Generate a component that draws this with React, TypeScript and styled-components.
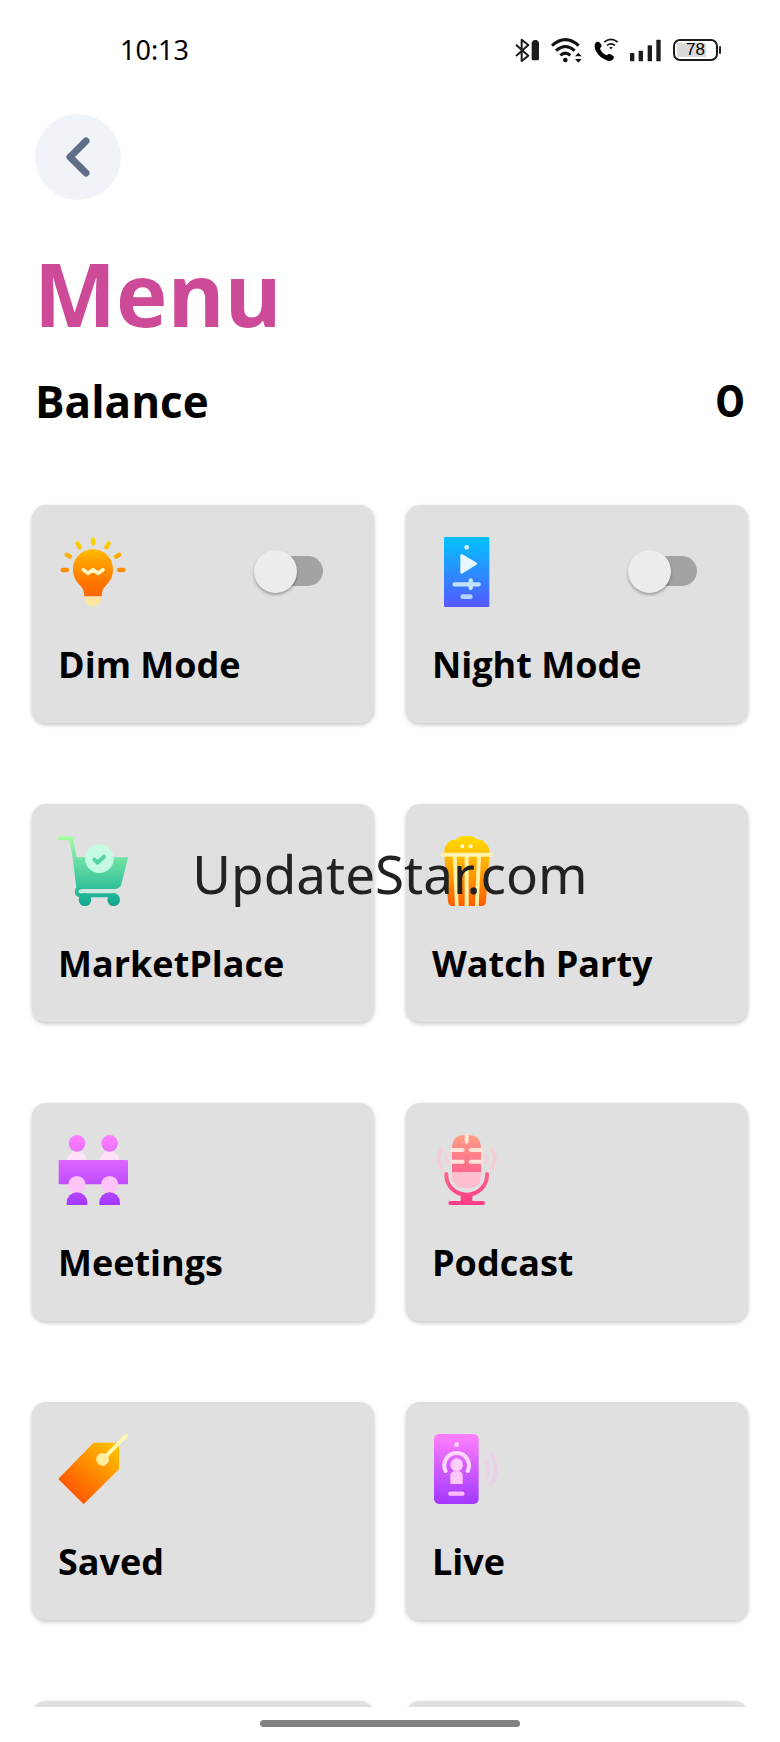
import React, { useState } from "react";
import styled, { createGlobalStyle } from "styled-components";

const GlobalStyle = createGlobalStyle`
  *, *::before, *::after { box-sizing: border-box; }
  body { margin: 0; background: #fff; }
`;

const Screen = styled.div`
  position: relative;
  display: flex;
  flex-direction: column;
  height: 100vh;
  overflow: hidden;
  background: #fff;
  color: #000;
  font-family: "Open Sans", "Noto Sans", sans-serif;
`;

const StatusBar = styled.header`
  display: flex;
  flex: none;
  align-items: center;
  justify-content: space-between;
  height: 100px;
  padding: 0 59px 0 120px;
`;

const Clock = styled.time`
  font: 400 27px/36px "Noto Sans", sans-serif;
`;

const StatusIcons = styled.div`
  display: flex;
  align-items: center;
  gap: 12px;
`;

const Battery = styled.div`
  display: flex;
  align-items: center;
  gap: 1px;

  &::after {
    content: "";
    width: 2px;
    height: 8px;
    border-radius: 1px;
    background: #222;
  }
`;

const BatteryShell = styled.span`
  display: grid;
  place-items: center;
  width: 45px;
  height: 22px;
  border: 2px solid #1c1c1c;
  border-radius: 7px;
  background: linear-gradient(#dadada, #dadada) 2px 2px / 29px 14px no-repeat;
  font: 400 17px/18px "Liberation Sans", sans-serif;
`;

const Content = styled.main`
  flex: 1;
  min-height: 0;
  overflow: hidden;
  padding: 14px 32px 0;
`;

const BackButton = styled.button`
  display: grid;
  place-items: center;
  width: 86px;
  height: 86px;
  margin-left: 3px;
  padding: 0;
  border: 0;
  border-radius: 50%;
  background: #f0f3f8;
  cursor: pointer;
`;

const Title = styled.h1`
  margin: 43px 0 28px;
  padding: 0 2px;
  color: #cd4a99;
  font-size: 87px;
  font-weight: 700;
  line-height: 100px;
`;

const Balance = styled.section`
  display: flex;
  align-items: center;
  justify-content: space-between;
  margin-bottom: 74px;
  padding: 0 3px;
  font-size: 44px;
  font-weight: 700;
  line-height: 60px;
`;

const Amount = styled.span`
  font-family: "Inter", sans-serif;
`;

const CardGrid = styled.div`
  display: grid;
  grid-template-columns: 1fr 1fr;
  gap: 81px 32px;
`;

const Card = styled.div`
  display: flex;
  flex-direction: column;
  gap: 34px;
  height: 218px;
  padding: 32px 26px;
  border: 0;
  border-radius: 14px;
  background: #e0e0e0;
  box-shadow: 0 2px 4px rgba(0, 0, 0, 0.22);
  color: inherit;
  font: inherit;
  text-align: left;
  cursor: pointer;
`;

const CardTop = styled.span`
  display: flex;
  align-items: center;
  justify-content: space-between;
  width: 100%;
  height: 70px;
`;

const CardLabel = styled.span`
  font-size: 36px;
  font-weight: 700;
  line-height: 48px;
  white-space: nowrap;
`;

const Switch = styled.input`
  position: relative;
  appearance: none;
  width: 66px;
  height: 30px;
  margin: 0 25px 2px 0;
  border-radius: 15px;
  background: #a3a3a3;
  cursor: pointer;

  &::before {
    content: "";
    position: absolute;
    top: -6px;
    left: -3px;
    width: 43px;
    height: 43px;
    border-radius: 50%;
    background: #ececec;
    box-shadow: 0 2px 3px rgba(0, 0, 0, 0.3);
  }

  &:checked {
    background: #e3a3c8;
  }

  &:checked::before {
    left: 26px;
    background: #cd4a99;
  }
`;

const Watermark = styled.div`
  position: absolute;
  inset: 0;
  display: grid;
  place-items: center;
  padding-top: 6px;
  color: #222;
  font: 400 53px/72px "Noto Sans", sans-serif;
  pointer-events: none;
`;

const NavBar = styled.footer`
  display: flex;
  flex: none;
  justify-content: center;
  height: 35px;
  padding-top: 13px;
`;

const NavHandle = styled.span`
  width: calc(100% / 3);
  height: 7px;
  border-radius: 4px;
  background: #808080;
`;

const IconSvg = styled.svg`
  display: block;
  flex: none;
  width: 70px;
  height: 70px;
  overflow: visible;
`;

type GradientProps = { id: string; stops: string[]; diagonal?: boolean };

function Gradient({ id, stops, diagonal }: GradientProps) {
  const line = diagonal
    ? { x1: 190, y1: 30, x2: 50, y2: 180 }
    : { x1: 0, y1: 0, x2: 0, y2: 210 };
  return (
    <defs>
      <linearGradient id={id} gradientUnits="userSpaceOnUse" {...line}>
        {stops.map((color, i) => (
          <stop key={color} offset={i / (stops.length - 1)} stopColor={color} />
        ))}
      </linearGradient>
    </defs>
  );
}

function BulbIcon() {
  return (
    <IconSvg viewBox="0 0 210 210" fill="none" aria-hidden="true">
      <Gradient id="bulb" stops={["#ffdf00", "#ffa000", "#ff7400", "#ff5c00"]} />
      <path
        d="M105 8V19M58 19L65 31M152 19L145 31M26 53L36 59M184 53L174 59M14 99H27M183 99H196"
        stroke="url(#bulb)" strokeWidth="13" strokeLinecap="round"
      />
      <path
        d="M105 37C71 37 45 64 45 98C45 120 56 134 66 145C75 155 79 164 79 178H131C131 164 135 155 144 145C154 134 165 120 165 98C165 64 139 37 105 37Z"
        fill="url(#bulb)"
      />
      <path d="M80 179H130C131 196 121 207 105 207S79 196 80 179Z" fill="#ffe6a0" />
      <path d="M76 98L90 109L105 98L120 109L135 98" stroke="#fff7c4" strokeWidth="11" strokeLinecap="round" strokeLinejoin="round" />
    </IconSvg>
  );
}

function PlayerIcon() {
  return (
    <IconSvg viewBox="0 0 210 210" fill="none" aria-hidden="true">
      <Gradient id="player" stops={["#00c3ff", "#5558ff"]} />
      <rect x="36" width="136" height="210" rx="4" fill="url(#player)" />
      <circle cx="104" cy="31" r="7" fill="#d4f5ff" />
      <path d="M89 55V106L131 80Z" fill="#e8f7ff" stroke="#e8f7ff" strokeWidth="8" strokeLinejoin="round" />
      <path d="M68 142H140M116 130V153" stroke="#c2e2ff" strokeWidth="13" strokeLinecap="round" />
      <path d="M92 179H115" stroke="#b4d6ff" strokeWidth="14" strokeLinecap="round" />
    </IconSvg>
  );
}

function CartIcon() {
  return (
    <IconSvg viewBox="0 0 210 210" fill="none" aria-hidden="true">
      <Gradient id="cart" stops={["#a8ff9e", "#6fe0a4", "#3cc79c", "#0ea58f"]} />
      <path d="M6 7H39L51 68" stroke="url(#cart)" strokeWidth="12" strokeLinecap="round" strokeLinejoin="round" />
      <path d="M44 64H210L190 145Q186 158 172 159H66Q55 159 54 148Z" fill="url(#cart)" />
      <path d="M66 155C53 155 53 178 66 178H170" stroke="url(#cart)" strokeWidth="12" strokeLinecap="round" />
      <path d="M66 166H176" stroke="#c8ece0" strokeWidth="9" strokeLinecap="round" />
      <circle cx="81" cy="191" r="19" fill="url(#cart)" />
      <circle cx="167" cy="191" r="19" fill="url(#cart)" />
      <circle cx="124" cy="68" r="43" fill="#c4fbe2" />
      <path d="M109 71L118 80L138 62" stroke="#58d3a4" strokeWidth="12" strokeLinecap="round" strokeLinejoin="round" />
    </IconSvg>
  );
}

function PopcornIcon() {
  return (
    <IconSvg viewBox="0 0 210 210" fill="none" aria-hidden="true">
      <Gradient id="popcorn" stops={["#ffdc00", "#ffb400", "#ff8c00", "#ff5c00"]} />
      <path
        d="M37 52C36 36 42 23 52 17C58 11 65 11 72 11C80 0 96 -2 104 1C115 -2 128 2 136 11C145 10 152 12 156 18C167 24 173 37 172 52Z"
        fill="url(#popcorn)"
      />
      <path d="M37 60H172L162 196Q161 210 148 210H62Q49 210 48 196Z" fill="url(#popcorn)" />
      <path d="M62 60H74L80 210H69ZM98 60H110V210H98ZM135 60H147L140 210H129Z" fill="#fff0a6" />
      <path d="M31 56H178" stroke="#fff2b0" strokeWidth="12" strokeLinecap="round" />
      <circle cx="91" cy="31" r="6" fill="#fffad0" />
      <circle cx="116" cy="31" r="6" fill="#fffad0" />
    </IconSvg>
  );
}

function MeetingIcon() {
  return (
    <IconSvg viewBox="0 0 210 210" fill="none" aria-hidden="true">
      <Gradient id="meeting" stops={["#ff80ff", "#a338ff"]} />
      {[57, 155].map((x) => (
        <g key={x}>
          <path d={`M${x - 29} 75C${x - 24} 41 ${x + 24} 41 ${x + 29} 75Z`} fill="#ffe2fa" />
          <circle cx={x} cy="25" r="25" fill="url(#meeting)" />
        </g>
      ))}
      <rect x="2" y="75" width="208" height="73" rx="3" fill="url(#meeting)" />
      {[57, 155].map((x) => (
        <g key={x}>
          <circle cx={x} cy="149" r="26" fill="#ffc4f8" />
          <path d={`M${x - 31} 210V203A31 31 0 0 1 ${x + 31} 203V210Z`} fill="url(#meeting)" />
        </g>
      ))}
    </IconSvg>
  );
}

function MicIcon() {
  return (
    <IconSvg viewBox="0 0 210 210" fill="none" aria-hidden="true">
      <Gradient id="mic" stops={["#ff9e85", "#ff6a8a", "#ff3a86"]} />
      <path d="M60 111V40Q60 0 100 0H107Q147 0 147 40V111Z" fill="url(#mic)" />
      <path d="M60 111H147V122Q147 159 110 159H97Q60 159 60 122Z" fill="#ffbfcf" />
      <path d="M104 0V20M61 45H92M116 45H147M61 80H92M116 80H147" stroke="#ffe4dc" strokeWidth="12" strokeLinecap="round" />
      <path d="M43 117V121A61 58 0 0 0 165 121V117" stroke="url(#mic)" strokeWidth="12" strokeLinecap="round" />
      <path d="M86 174H121V198H153Q159 198 159 204T153 210H55Q49 210 49 204T55 198H86Z" fill="url(#mic)" />
      <path d="M28 44Q12 71 28 100M180 44Q198 71 180 100" stroke="#f2cfd7" strokeWidth="12" strokeLinecap="round" />
      <path d="M48 60Q39 71 48 84M160 60Q169 71 160 84" stroke="#f3cfd8" strokeWidth="10" strokeLinecap="round" />
    </IconSvg>
  );
}

function TagIcon() {
  return (
    <IconSvg viewBox="0 0 210 210" fill="none" aria-hidden="true">
      <Gradient id="tag" stops={["#ffc800", "#ff9200", "#ff5c00"]} diagonal />
      <path d="M108 29H180V104L77 206L5 135Z" fill="url(#tag)" stroke="url(#tag)" strokeWidth="6" strokeLinejoin="round" />
      <path d="M134 76L205 5" stroke="#fff8b4" strokeWidth="11" strokeLinecap="round" />
      <circle cx="134" cy="76" r="19" fill="#ffeda0" />
    </IconSvg>
  );
}

function LiveIcon() {
  return (
    <IconSvg viewBox="0 0 210 210" fill="none" aria-hidden="true">
      <Gradient id="live" stops={["#ff80ff", "#a338ff"]} />
      <rect x="6" width="134" height="210" rx="15" fill="url(#live)" />
      <circle cx="74" cy="32" r="7" fill="#ffdcfc" />
      <path d="M41 111A37 37 0 1 1 107 111" stroke="#ffd9fb" strokeWidth="12" strokeLinecap="round" />
      <circle cx="74" cy="92" r="19" fill="#ffcdf9" />
      <path d="M55 150V125Q55 111 74 111T92 125V150Z" fill="#ffc8f8" />
      <path d="M55 179H91" stroke="#ffbdf8" strokeWidth="13" strokeLinecap="round" />
      <path d="M177 60Q206 106 177 152" stroke="#ecd0ea" strokeWidth="12" strokeLinecap="round" />
      <path d="M162 82Q174 106 162 134" stroke="#ead2e8" strokeWidth="12" strokeLinecap="round" />
    </IconSvg>
  );
}

function BluetoothIcon() {
  return (
    <svg width="24" height="24" viewBox="0 0 72 72" fill="none" aria-hidden="true">
      <path d="M3 20L40 53L20 69V5L40 21L3 54" stroke="#1c1c1c" strokeWidth="6" strokeLinejoin="round" />
      <path d="M55 9V6H67V9Q72 9 72 14V62Q72 67 67 67H55Q50 67 50 62V14Q50 9 55 9Z" fill="#1c1c1c" />
    </svg>
  );
}

function WifiIcon() {
  return (
    <svg width="31" height="25" viewBox="0 0 93 75" fill="none" aria-hidden="true">
      <path d="M3 23Q43 -13 83 23M15 38Q43 13 71 38M28 52Q43 39 58 52" stroke="#111" strokeWidth="9" />
      <circle cx="43" cy="66" r="7" fill="#111" />
      <path d="M72 55L82 44L92 55ZM72 63H92L82 74Z" fill="#111" />
    </svg>
  );
}

function CallIcon() {
  return (
    <svg width="24" height="24" viewBox="0 0 72 72" fill="none" aria-hidden="true">
      <path
        d="M6 13Q12 9 18 14L23 22Q24 27 18 31C20 40 29 49 39 52Q43 47 48 48L58 54Q62 58 58 63Q52 71 41 68C20 62 2 42 2 25Q1 17 6 13Z"
        fill="#000"
      />
      <path d="M31 12Q51 -4 71 12M39 22Q51 13 63 22" stroke="#111" strokeWidth="5" />
      <path d="M46 29Q51 24 56 29L51 34Z" fill="#111" />
    </svg>
  );
}

function SignalIcon() {
  return (
    <svg width="31" height="23" viewBox="0 0 93 69" fill="#1c1c1c" aria-hidden="true">
      <rect y="42" width="13" height="25" rx="2" />
      <rect x="26" y="35" width="13" height="32" rx="2" />
      <rect x="53" y="19" width="13" height="48" rx="2" />
      <rect x="79" y="2" width="13" height="65" rx="2" />
    </svg>
  );
}

type Item = { label: string; Icon: () => React.JSX.Element; toggle?: boolean };

const items: Item[] = [
  { label: "Dim Mode", Icon: BulbIcon, toggle: true },
  { label: "Night Mode", Icon: PlayerIcon, toggle: true },
  { label: "MarketPlace", Icon: CartIcon },
  { label: "Watch Party", Icon: PopcornIcon },
  { label: "Meetings", Icon: MeetingIcon },
  { label: "Podcast", Icon: MicIcon },
  { label: "Saved", Icon: TagIcon },
  { label: "Live", Icon: LiveIcon },
];

function MenuCard({ label, Icon, toggle }: Item) {
  const [on, setOn] = useState(false);
  if (toggle) {
    return (
      <Card as="label">
        <CardTop>
          <Icon />
          <Switch type="checkbox" role="switch" checked={on} onChange={() => setOn(!on)} />
        </CardTop>
        <CardLabel>{label}</CardLabel>
      </Card>
    );
  }
  return (
    <Card as="button">
      <CardTop>
        <Icon />
      </CardTop>
      <CardLabel>{label}</CardLabel>
    </Card>
  );
}

export default function App() {
  return (
    <Screen>
      <GlobalStyle />
      <StatusBar>
        <Clock>10:13</Clock>
        <StatusIcons>
          <BluetoothIcon />
          <WifiIcon />
          <CallIcon />
          <SignalIcon />
          <Battery>
            <BatteryShell>78</BatteryShell>
          </Battery>
        </StatusIcons>
      </StatusBar>
      <Content>
        <BackButton aria-label="Back">
          <svg width="24" height="40" viewBox="0 0 24 40" fill="none" aria-hidden="true">
            <path d="M20 4L4 20L20 36" stroke="#5f6f87" strokeWidth="7" strokeLinecap="round" strokeLinejoin="round" />
          </svg>
        </BackButton>
        <Title>Menu</Title>
        <Balance>
          <span>Balance</span>
          <Amount>0</Amount>
        </Balance>
        <CardGrid>
          {items.map((item) => (
            <MenuCard key={item.label} {...item} />
          ))}
          <Card aria-hidden="true" />
          <Card aria-hidden="true" />
        </CardGrid>
      </Content>
      <NavBar>
        <NavHandle />
      </NavBar>
      <Watermark>UpdateStar.com</Watermark>
    </Screen>
  );
}
